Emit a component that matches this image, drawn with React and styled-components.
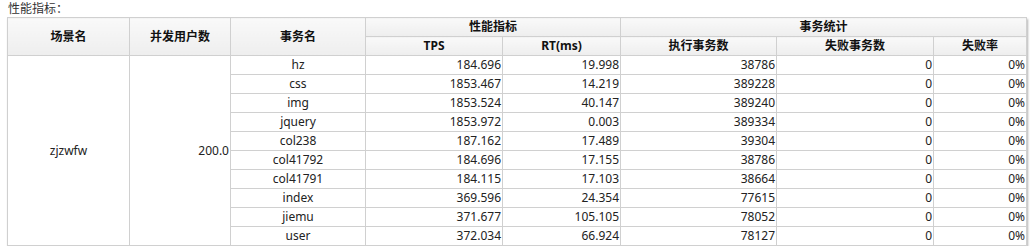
import React from "react";
import styled, { createGlobalStyle } from "styled-components";

const rows = [
  { name: "hz", tps: "184.696", rt: "19.998", done: "38786", fail: "0", rate: "0%" },
  { name: "css", tps: "1853.467", rt: "14.219", done: "389228", fail: "0", rate: "0%" },
  { name: "img", tps: "1853.524", rt: "40.147", done: "389240", fail: "0", rate: "0%" },
  { name: "jquery", tps: "1853.972", rt: "0.003", done: "389334", fail: "0", rate: "0%" },
  { name: "col238", tps: "187.162", rt: "17.489", done: "39304", fail: "0", rate: "0%" },
  { name: "col41792", tps: "184.696", rt: "17.155", done: "38786", fail: "0", rate: "0%" },
  { name: "col41791", tps: "184.115", rt: "17.103", done: "38664", fail: "0", rate: "0%" },
  { name: "index", tps: "369.596", rt: "24.354", done: "77615", fail: "0", rate: "0%" },
  { name: "jiemu", tps: "371.677", rt: "105.105", done: "78052", fail: "0", rate: "0%" },
  { name: "user", tps: "372.034", rt: "66.924", done: "78127", fail: "0", rate: "0%" },
];

const colWidths = [122, 101, 135, 137, 118, 156, 157, 93];

const GlobalStyle = createGlobalStyle`
  body {
    margin: 0;
    background: #fff;
    font-family: "Noto Sans", "Noto Sans CJK SC", sans-serif;
    color: #222;
  }
`;

const Wrap = styled.div`
  padding: 0 0 0 7px;
`;

const Title = styled.div`
  font-size: 12px;
  line-height: 17px;
  height: 17px;
  padding-left: 1px;
  color: #333;
`;

const Table = styled.table`
  border-collapse: collapse;
  table-layout: fixed;
  width: 1019px;
  font-size: 12px;
  box-shadow: 1px 2px 2px rgba(0, 0, 0, 0.3);
`;

const Th = styled.th`
  height: 18px;
  padding: 0;
  border: 1px solid #d0d0d0;
  background: linear-gradient(#f9f9f9, #eeeeee);
  font-weight: bold;
  font-size: 12px;
  line-height: 16px;
  color: #111;
  text-align: center;
`;

const Td = styled.td`
  height: 18px;
  padding: 0 ${(p) => (p.$right ? "1px" : "0")} 0 0;
  border: 1px solid #d0d0d0;
  line-height: 16px;
  text-align: ${(p) => (p.$right ? "right" : "center")};
  white-space: nowrap;
  overflow: hidden;
`;

export default function App() {
  return (
    <Wrap>
      <GlobalStyle />
      <Title>性能指标：</Title>
      <Table>
        <colgroup>
          {colWidths.map((w, i) => (
            <col key={i} style={{ width: w }} />
          ))}
        </colgroup>
        <thead>
          <tr>
            <Th rowSpan={2}>场景名</Th>
            <Th rowSpan={2}>并发用户数</Th>
            <Th rowSpan={2}>事务名</Th>
            <Th colSpan={2}>性能指标</Th>
            <Th colSpan={3}>事务统计</Th>
          </tr>
          <tr>
            <Th>TPS</Th>
            <Th>RT(ms)</Th>
            <Th>执行事务数</Th>
            <Th>失败事务数</Th>
            <Th>失败率</Th>
          </tr>
        </thead>
        <tbody>
          {rows.map((r, i) => (
            <tr key={r.name}>
              {i === 0 && <Td rowSpan={rows.length}>zjzwfw</Td>}
              {i === 0 && (
                <Td rowSpan={rows.length} $right>
                  200.0
                </Td>
              )}
              <Td>{r.name}</Td>
              <Td $right>{r.tps}</Td>
              <Td $right>{r.rt}</Td>
              <Td $right>{r.done}</Td>
              <Td $right>{r.fail}</Td>
              <Td $right>{r.rate}</Td>
            </tr>
          ))}
        </tbody>
      </Table>
    </Wrap>
  );
}
